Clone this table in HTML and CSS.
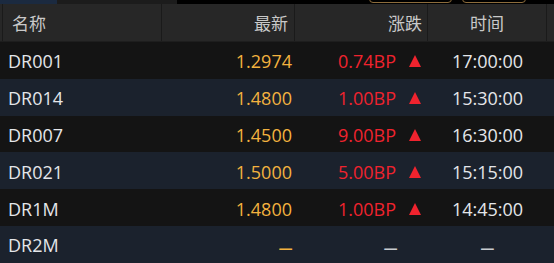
FILE: index.html
```html
<!DOCTYPE html>
<html lang="zh">
<head>
<meta charset="utf-8">
<link rel="stylesheet" href="styles.css">
</head>
<body>
<div class="panel">
  <div class="topstrip">
    <div class="seg seg-navy"></div>
    <div class="seg seg-gray"></div>
    <div class="seg seg-black">
      <span class="tbtn tbtn-a"></span>
      <span class="tbtn tbtn-b"></span>
    </div>
  </div>
  <div class="head">
    <div class="hcell hname">名称</div>
    <div class="hcell hright">最新</div>
    <div class="hcell hright hchg">涨跌</div>
    <div class="hcell hcenter">时间</div>
    <div class="hcell hpad"></div>
  </div>
  <div class="row odd">
    <div class="c name">DR001</div>
    <div class="c price">1.2974</div>
    <div class="c chg"><span class="bp">0.74BP</span><svg class="tri" viewBox="0 0 12 12"><polygon points="6,0 12,12 0,12"/></svg></div>
    <div class="c time">17:00:00</div>
  </div>
  <div class="row even">
    <div class="c name">DR014</div>
    <div class="c price">1.4800</div>
    <div class="c chg"><span class="bp">1.00BP</span><svg class="tri" viewBox="0 0 12 12"><polygon points="6,0 12,12 0,12"/></svg></div>
    <div class="c time">15:30:00</div>
  </div>
  <div class="row odd">
    <div class="c name">DR007</div>
    <div class="c price">1.4500</div>
    <div class="c chg"><span class="bp">9.00BP</span><svg class="tri" viewBox="0 0 12 12"><polygon points="6,0 12,12 0,12"/></svg></div>
    <div class="c time">16:30:00</div>
  </div>
  <div class="row even">
    <div class="c name">DR021</div>
    <div class="c price">1.5000</div>
    <div class="c chg"><span class="bp">5.00BP</span><svg class="tri" viewBox="0 0 12 12"><polygon points="6,0 12,12 0,12"/></svg></div>
    <div class="c time">15:15:00</div>
  </div>
  <div class="row odd">
    <div class="c name">DR1M</div>
    <div class="c price">1.4800</div>
    <div class="c chg"><span class="bp">1.00BP</span><svg class="tri" viewBox="0 0 12 12"><polygon points="6,0 12,12 0,12"/></svg></div>
    <div class="c time">14:45:00</div>
  </div>
  <div class="row even">
    <div class="c name">DR2M</div>
    <div class="c price"><span class="dash dash-o">–</span></div>
    <div class="c chg"><span class="dash">–</span><span class="tri-slot"></span></div>
    <div class="c time"><span class="dash">–</span></div>
  </div>
</div>
</body>
</html>
```

FILE: styles.css
```css
* { box-sizing: border-box; }
html, body {
  margin: 0;
  padding: 0;
  background: #141414;
}
.panel {
  width: 554px;
  height: 263px;
  overflow: hidden;
  font-family: "Open Sans", "Noto Sans CJK SC", sans-serif;
}
.topstrip {
  display: flex;
  height: 4px;
  overflow: hidden;
}
.seg { height: 4px; }
.seg-navy { width: 57px; background: #1b2a40; }
.seg-gray { width: 120px; background: #1c1c1c; }
.seg-black {
  flex: 1;
  background: #000;
  display: flex;
  align-items: flex-end;
  padding-left: 192px;
}
.tbtn {
  display: block;
  height: 14px;
  border: 1px solid #8c6c3c;
  border-radius: 4px;
  margin-bottom: 1px;
}
.tbtn-a { width: 83px; }
.tbtn-b { width: 64px; margin-left: 10px; }

.head {
  display: grid;
  grid-template-columns: 2px 160px 133px 133px 119px 1fr;
  height: 38px;
  background: #272727;
  border-bottom: 1px solid #1e1e1e;
  font-family: "Noto Sans CJK SC", sans-serif;
  font-size: 17px;
  color: #c9c9c9;
}
.hcell {
  display: flex;
  align-items: center;
  border-right: 1px solid #1a1a1a;
  height: 37px;
}
.hname {
  grid-column: 2;
  border-left: 1px solid #1a1a1a;
  padding-left: 9px;
}
.hright { justify-content: flex-end; padding-right: 6px; }
.hchg { padding-right: 5px; }
.hcenter { justify-content: center; }
.hpad { border-right: none; }

.row {
  display: grid;
  grid-template-columns: 162px 133px 133px 119px 1fr;
  height: 36.8px;
  font-size: 18px;
  align-items: center;
}
.odd { background: #141414; }
.even { background: #1b222d; }
.c {
  display: flex;
  align-items: center;
  height: 100%;
  padding-top: 2px;
  white-space: nowrap;
}
.name { padding-left: 8px; color: #e4e6ea; }
.price { justify-content: flex-end; padding-right: 3px; color: #f3b23f; }
.chg { justify-content: flex-end; padding-right: 7px; color: #f0232e; }
.bp { margin-right: 13px; }
.tri { width: 12px; height: 12px; fill: #f0232e; }
.tri-slot { display: inline-block; width: 12px; }
.time { justify-content: center; color: #e4e6ea; }
.dash {
  font-family: "Liberation Sans", sans-serif;
  font-size: 23px;
  color: #c8ccd0;
  margin-right: 12px;
  padding-top: 4px;
}
.price .dash, .time .dash { margin-right: 0; }
.dash-o { color: #f3b23f; }
```
